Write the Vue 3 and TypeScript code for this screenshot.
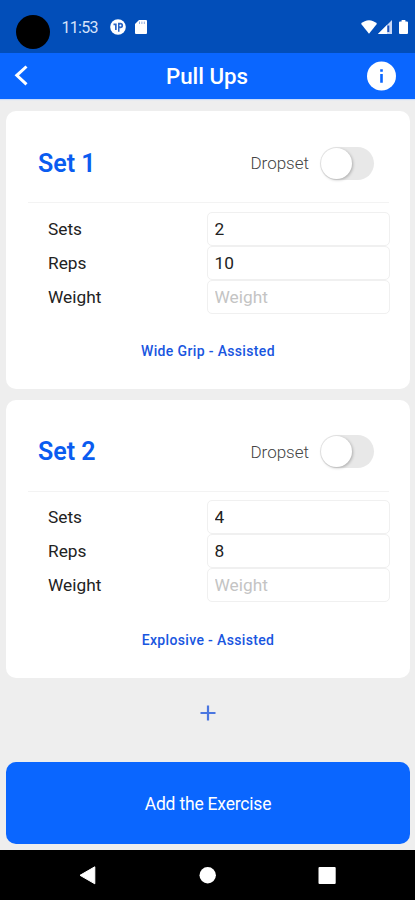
<script setup lang="ts">
import { ref } from 'vue'

interface Field {
  label: string
  value: string
}

interface ExerciseSet {
  id: number
  dropset: boolean
  fields: Field[]
  variant: string
}

const sets = ref<ExerciseSet[]>([
  {
    id: 1,
    dropset: false,
    fields: [
      { label: 'Sets', value: '2' },
      { label: 'Reps', value: '10' },
      { label: 'Weight', value: '' },
    ],
    variant: 'Wide Grip - Assisted',
  },
  {
    id: 2,
    dropset: false,
    fields: [
      { label: 'Sets', value: '4' },
      { label: 'Reps', value: '8' },
      { label: 'Weight', value: '' },
    ],
    variant: 'Explosive - Assisted',
  },
])

function addSet(): void {
  sets.value.push({
    id: sets.value.length + 1,
    dropset: false,
    fields: ['Sets', 'Reps', 'Weight'].map((label) => ({ label, value: '' })),
    variant: 'Assisted',
  })
}
</script>

<template>
  <div class="screen">
    <div class="status">
      <span class="camera"></span>
      <span class="clock">11:53</span>
      <svg class="app-icon" viewBox="0 0 16 16" width="16" height="16">
        <circle cx="8" cy="8" r="7.8" fill="#fff" />
        <path d="M3.500 4.500h3.200v6.500H5V6.200H3.500z" fill="#2a65c6" />
        <path d="M8 3.800h2.400a2.700 2.700 0 0 1 0 5.400H9.500v3.600H8z" fill="#2a65c6" />
        <circle cx="10.400" cy="6.500" r="1" fill="#fff" />
      </svg>
      <svg class="card-icon" viewBox="0 0 12 14" width="12" height="14">
        <path d="M4 0h7a1 1 0 0 1 1 1v12a1 1 0 0 1-1 1H1a1 1 0 0 1-1-1V4z" fill="#fff" />
        <path d="M4.500 1.600v2.400M6.900 1.600v2.400M9.300 1.600v2.400" stroke="#8fabdf" stroke-width="1" />
      </svg>
      <span class="grow"></span>
      <svg class="wifi" viewBox="0 0 16 14" width="16" height="14">
        <path d="M0 3.800C4.500-.9 11.500-.9 16 3.800L8 13.700z" fill="#fff" />
      </svg>
      <svg class="signal" viewBox="0 0 14 14" width="14" height="14">
        <path d="M14 0v14H0z" fill="#c9d8f6" />
        <path d="M9 5v9H0z" fill="#fff" />
        <path d="M10.300 5.500v6.500" stroke="#1750bd" stroke-width="2" />
      </svg>
      <svg class="battery" viewBox="0 0 9 14" width="9" height="14">
        <path d="M2.600 0h3.800v1.400H8a1 1 0 0 1 1 1V13a1 1 0 0 1-1 1H1a1 1 0 0 1-1-1V2.400a1 1 0 0 1 1-1h1.600z" fill="#fff" />
      </svg>
    </div>

    <header class="bar">
      <button class="plain back" aria-label="Back">
        <svg viewBox="0 0 14 22" width="14" height="22">
          <path d="M12.500 1.500 2.800 10.300 12.500 19.300" fill="none" stroke="#fff" stroke-width="3" />
        </svg>
      </button>
      <h1 class="title">Pull Ups</h1>
      <button class="plain info" aria-label="Information">
        <svg viewBox="0 0 30 30" width="30" height="30">
          <circle cx="15.500" cy="15" r="14.500" fill="#fff" />
          <path d="M14.200 8.200h2.600v2.500h-2.600zM14.200 13h2.600v8.800h-2.600z" fill="#0a66ff" />
        </svg>
      </button>
    </header>

    <main class="content">
      <section v-for="set in sets" :key="set.id" class="card">
        <div class="card-head">
          <h2 class="set-name">Set {{ set.id }}</h2>
          <span class="drop">Dropset</span>
          <button
            class="plain toggle"
            :class="{ on: set.dropset }"
            role="switch"
            aria-label="Dropset"
            :aria-checked="set.dropset"
            @click="set.dropset = !set.dropset"
          >
            <span class="knob"></span>
          </button>
        </div>
        <div class="fields">
          <label v-for="field in set.fields" :key="field.label" class="row">
            <span class="label">{{ field.label }}</span>
            <input v-model="field.value" class="input" type="text" :placeholder="field.label" />
          </label>
        </div>
        <button class="plain variant">{{ set.variant }}</button>
      </section>

      <button class="plain add" aria-label="Add set" @click="addSet">
        <svg viewBox="0 0 16 16" width="16" height="16">
          <path d="M8 .5v15M.5 8h15" stroke="#4a76e0" stroke-width="2.200" />
        </svg>
      </button>
      <button class="plain submit">Add the Exercise</button>
    </main>

    <nav class="nav">
      <svg viewBox="0 0 18 20" width="18" height="20">
        <path d="M15.800 1.800v17L1 10.300z" fill="#fff" stroke="#fff" stroke-linejoin="round" />
      </svg>
      <svg viewBox="0 0 18 20" width="18" height="20">
        <circle cx="8.700" cy="10.200" r="8.200" fill="#fff" />
      </svg>
      <svg viewBox="0 0 18 20" width="18" height="20">
        <rect x=".5" y="2" width="17.200" height="17" rx="1" fill="#fff" />
      </svg>
    </nav>
  </div>
</template>

<style>
body {
  margin: 0;
  background: #eee;
}
</style>

<style scoped>
.screen {
  display: flex;
  flex-direction: column;
  width: 100%;
  height: 900px;
  overflow: hidden;
  background: #eee;
  color: #222;
  font-family: Roboto, "Liberation Sans", sans-serif;
}

svg {
  display: block;
  flex: none;
}

.plain {
  margin: 0;
  padding: 0;
  border: 0;
  background: none;
  font: inherit;
}

.status {
  display: flex;
  align-items: center;
  box-sizing: border-box;
  height: 53px;
  flex: none;
  padding: 1px 7.500px 0 16px;
  background: #024eb9;
}

.camera {
  width: 34px;
  height: 34px;
  margin-top: 10px;
  border-radius: 50%;
  background: #000;
}

.clock {
  width: 48px;
  margin-left: 11.500px;
  color: #d5e2fa;
  font-size: 16px;
  letter-spacing: -0.7px;
}

.card-icon {
  margin-left: 9.500px;
}

.grow {
  flex: 1;
}

.signal {
  margin-left: 1px;
}

.battery {
  margin-left: 6.500px;
}

.bar {
  display: flex;
  align-items: center;
  justify-content: space-between;
  box-sizing: border-box;
  height: 46px;
  flex: none;
  padding: 0 19px 0 14px;
  background: #0a66ff;
  box-shadow: 0 1px 1px #cbdcfa;
}

.back {
  width: 34px;
}

.title {
  margin: 0;
  color: #fff;
  font-size: 22.300px;
  font-weight: 500;
}

.content {
  display: flex;
  flex: 1;
  flex-direction: column;
  gap: 10.500px;
  padding: 12px 5px 6px 6px;
}

.card {
  display: flex;
  flex-direction: column;
  flex: none;
  height: 278px;
  border-radius: 10px;
  background: #fff;
}

.card-head {
  display: flex;
  align-items: center;
  height: 91px;
  margin: 0 21px 0 22px;
  padding: 0 15px 0 10px;
  border-bottom: 1px solid #f3f3f3;
}

.set-name {
  flex: 1;
  margin: 13px 0 0;
  color: #0a5cf0;
  font-size: 25px;
  font-weight: 600;
}

.drop {
  margin: 13px 11px 0 0;
  color: #444;
  font-size: 17px;
  font-weight: 300;
}

.toggle {
  display: flex;
  width: 54px;
  height: 33px;
  margin-top: 13px;
  border-radius: 17px;
  background: #e8e8e8;
}

.knob {
  width: 31px;
  height: 31px;
  margin: 1px;
  border-radius: 50%;
  background: #fff;
  box-shadow: 1px 1px 3px rgba(0, 0, 0, 0.25);
}

.toggle.on {
  justify-content: flex-end;
  background: #0a66ff;
}

.fields {
  padding: 8.500px 20px 0 42px;
}

.row {
  display: flex;
  align-items: center;
  justify-content: space-between;
  height: 34px;
}

.label {
  font-size: 17.300px;
}

.input {
  box-sizing: border-box;
  width: 183px;
  height: 34px;
  padding: 0 7px 0 6.500px;
  border: 1px solid #f0f0f0;
  border-radius: 5px;
  outline: 0;
  background: #fff;
  color: #222;
  font: 17.300px Roboto, "Liberation Sans", sans-serif;
}

.input::placeholder {
  color: #c4c4c4;
}

.variant {
  margin-top: 27.500px;
  color: #1956e0;
  font-size: 14px;
  font-weight: 500;
  line-height: 20px;
  letter-spacing: 0.35px;
}

.add {
  display: flex;
  align-items: center;
  justify-content: center;
  height: 50px;
}

.submit {
  height: 82px;
  margin-top: 13.500px;
  padding-top: 1px;
  border-radius: 10px;
  background: #0a66ff;
  color: #fff;
  font-size: 17.500px;
  letter-spacing: -0.2px;
}

.nav {
  display: flex;
  align-items: center;
  justify-content: space-between;
  box-sizing: border-box;
  height: 50px;
  flex: none;
  padding: 0 79px;
  background: #000;
}
</style>
